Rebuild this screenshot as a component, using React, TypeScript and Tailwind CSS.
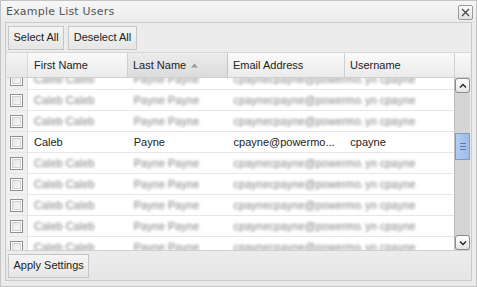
import React from "react";

const rows = [0, 1, 2, 3, 4, 5, 6, 7, 8];
const realIdx = 3;

function Checkbox() {
  return (
    <div className="w-[13px] h-[13px] border border-[#8f8f8f] bg-white p-[1px]">
      <div className="w-full h-full border border-[#d0d0d0] bg-gradient-to-br from-[#e6e6e6] to-[#f8f8f8]" />
    </div>
  );
}

function Btn({ children }: { children: React.ReactNode }) {
  return (
    <div className="h-[24px] px-[4.5px] flex items-center border border-[#c6c6c6] bg-gradient-to-b from-[#f4f4f4] to-[#e6e6e6] text-[11px] text-[#222] leading-none">
      {children}
    </div>
  );
}

const blurCls =
  "pl-[6px] flex items-center text-[rgba(0,0,0,0)] [text-shadow:0_0_3px_#a8a8a8,0_0_3px_#c4c4c4] whitespace-nowrap overflow-hidden";

export default function App() {
  const font = { fontFamily: '"Liberation Sans", Arial, sans-serif' };
  return (
    <div
      className="w-[477px] h-[287px] bg-[#ebebeb] border border-[#c4c4c4] flex flex-col overflow-hidden"
      style={font}
    >
      {/* Title bar */}
      <div className="h-[21px] flex items-center justify-between pl-[5px] pr-[3px] bg-gradient-to-b from-[#f7f7f7] to-[#ebebeb]">
        <span
          className="text-[11px] text-[#555] tracking-[0.2px] mt-[1px]"
          style={{ fontFamily: '"DejaVu Sans", sans-serif' }}
        >
          Example List Users
        </span>
        <div className="w-[15px] h-[15px] border border-[#9a9a9a] rounded-[2px] bg-gradient-to-b from-[#fafafa] to-[#e2e2e2] flex items-center justify-center mt-[1px]">
          <svg width="9" height="9" viewBox="0 0 9 9">
            <path d="M1 1 L8 8 M8 1 L1 8" stroke="#444" strokeWidth="1.2" />
          </svg>
        </div>
      </div>

      {/* Panel */}
      <div className="flex-1 mx-[4px] mb-[5px] border border-[#cacaca] bg-[#ececec] flex flex-col">
        {/* Toolbar */}
        <div className="h-[30px] flex items-center gap-[4px] px-[2px] border-b border-[#d6d6d6] bg-[#ececec]">
          <Btn>Select All</Btn>
          <Btn>Deselect All</Btn>
        </div>

        {/* Grid */}
        <div className="h-[198px] mx-[1px] flex flex-col bg-white border-b border-[#d0d0d0]">
          {/* Header */}
          <div className="h-[25px] flex border-b border-[#cfcfcf] text-[11px] text-[#222]">
            <div className="w-[21px] bg-gradient-to-b from-[#f4f4f4] to-[#e6e6e6] border-r border-[#d8d8d8]" />
            <div className="w-[100px] flex items-center pl-[6px] bg-gradient-to-b from-[#fafafa] to-[#ebebeb] border-r border-[#cfcfcf]">
              First Name
            </div>
            <div className="w-[100px] flex items-center pl-[5px] bg-gradient-to-b from-[#ececec] to-[#dcdcdc] border-r border-[#c4c4c4]">
              Last Name
              <svg width="7" height="5" viewBox="0 0 7 5" className="ml-[5px]">
                <path d="M0 4.5 L3.5 0.5 L7 4.5 Z" fill="#9a9a9a" />
              </svg>
            </div>
            <div className="w-[117px] flex items-center pl-[5px] bg-gradient-to-b from-[#fafafa] to-[#ebebeb] border-r border-[#cfcfcf]">
              Email Address
            </div>
            <div className="w-[110px] flex items-center pl-[5px] bg-gradient-to-b from-[#fafafa] to-[#ebebeb] border-r border-[#cfcfcf]">
              Username
            </div>
            <div className="flex-1 bg-gradient-to-b from-[#fafafa] to-[#ebebeb]" />
          </div>

          {/* Body */}
          <div className="flex-1 flex overflow-hidden">
            <div className="w-[449px] overflow-hidden">
              <div className="mt-[-9px]">
                {rows.map((i) => {
                  const real = i === realIdx;
                  return (
                    <div key={i} className="h-[21px] flex border-b border-[#e6e6e6] text-[11px]">
                      <div className="w-[21px] bg-[#f0f0f0] border-r border-[#dcdcdc] flex items-center justify-center">
                        <Checkbox />
                      </div>
                      {real ? (
                        <>
                          <div className="w-[100px] pl-[6px] flex items-center text-[#222]">Caleb</div>
                          <div className="w-[100px] pl-[6px] flex items-center text-[#222]">Payne</div>
                          <div className="w-[117px] pl-[6px] flex items-center text-[#222] whitespace-nowrap overflow-hidden">
                            cpayne@powermo...
                          </div>
                          <div className="w-[110px] pl-[6px] flex items-center text-[#222]">cpayne</div>
                        </>
                      ) : (
                        <>
                          <div className={"w-[100px] " + blurCls}>Caleb Caleb</div>
                          <div className={"w-[100px] " + blurCls}>Payne Payne</div>
                          <div className={"w-[136px] " + blurCls}>cpaynecpayne@powermo...</div>
                          <div className={"w-[91px] !pl-[2px] " + blurCls}>yn cpayne</div>
                        </>
                      )}
                    </div>
                  );
                })}
              </div>
            </div>
            {/* Scrollbar */}
            <div className="w-[16px] flex flex-col bg-[#d4d4d4] border-l border-[#bdbdbd]">
              <div className="h-[15px] rounded-[3px] border border-[#8c8c8c] bg-gradient-to-b from-[#ffffff] to-[#e4e4e4] flex items-center justify-center">
                <svg width="8" height="6" viewBox="0 0 8 6">
                  <path d="M1 4.5 L4 1.5 L7 4.5" stroke="#222" strokeWidth="1.4" fill="none" />
                </svg>
              </div>
              <div className="h-[40px]" />
              <div className="h-[27px] border border-[#7d9ccc] bg-gradient-to-r from-[#b3cdf0] to-[#9dbbe6] flex flex-col items-center justify-center gap-[2px]">
                <div className="w-[6px] h-[1px] bg-[#5a78a8]" />
                <div className="w-[6px] h-[1px] bg-[#5a78a8]" />
                <div className="w-[6px] h-[1px] bg-[#5a78a8]" />
              </div>
              <div className="flex-1" />
              <div className="h-[15px] rounded-[3px] border border-[#8c8c8c] bg-gradient-to-b from-[#ffffff] to-[#e4e4e4] flex items-center justify-center">
                <svg width="8" height="6" viewBox="0 0 8 6">
                  <path d="M1 1.5 L4 4.5 L7 1.5" stroke="#222" strokeWidth="1.4" fill="none" />
                </svg>
              </div>
            </div>
          </div>
        </div>

        {/* Footer */}
        <div className="flex-1 flex items-center px-[2px] bg-gradient-to-b from-[#ececec] to-[#e6e6e6]">
          <Btn>Apply Settings</Btn>
        </div>
      </div>
    </div>
  );
}
